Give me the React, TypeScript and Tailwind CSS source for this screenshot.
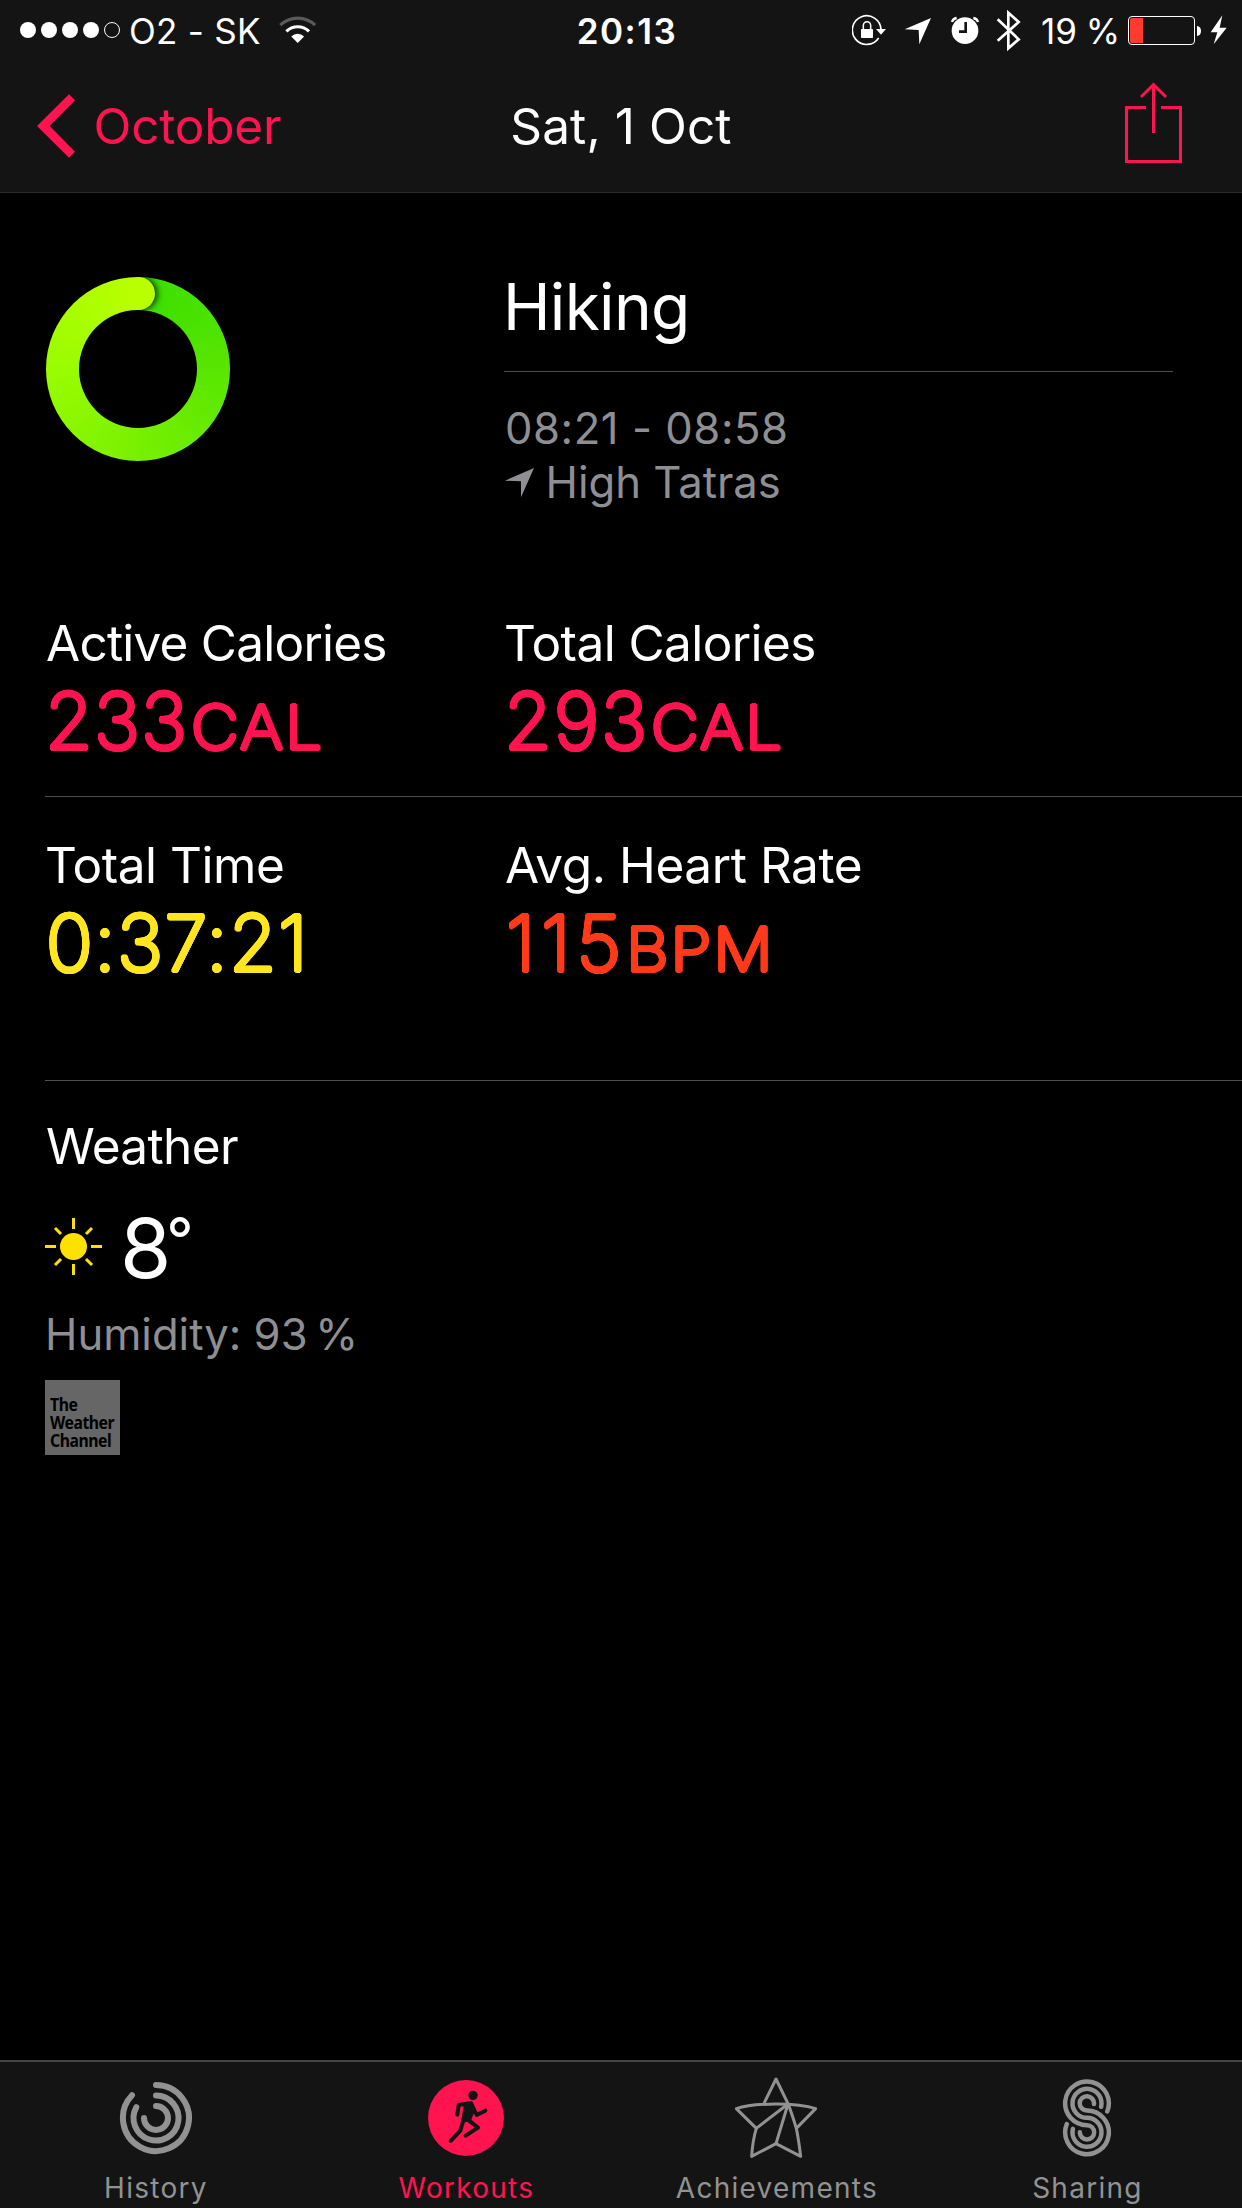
import type { ReactNode } from 'react'
import clsx from 'clsx'

// thickens the extra-light face evenly on all sides, which rounds its stroke ends
const ROUNDED =
  '[text-shadow:1.8px_0_0_currentColor,-1.8px_0_0_currentColor,0_1.8px_0_currentColor,0_-1.8px_0_currentColor,1.3px_1.3px_0_currentColor,-1.3px_1.3px_0_currentColor,1.3px_-1.3px_0_currentColor,-1.3px_-1.3px_0_currentColor,1.66px_0.7px_0_currentColor,-1.66px_0.7px_0_currentColor,1.66px_-0.7px_0_currentColor,-1.66px_-0.7px_0_currentColor,0.7px_1.66px_0_currentColor,-0.7px_1.66px_0_currentColor,0.7px_-1.66px_0_currentColor,-0.7px_-1.66px_0_currentColor]'

function SignalDots() {
  return (
    <svg width="100" height="16" viewBox="0 0 100 16" className="-mt-[2px]">
      {[8, 29, 50, 71].map((x) => (
        <circle key={x} cx={x} cy="8" r="8" fill="#fff" />
      ))}
      <circle cx="92" cy="8" r="7.5" fill="none" stroke="#fff" strokeWidth="1" />
    </svg>
  )
}

function Wifi() {
  return (
    <svg width="38" height="62" viewBox="279 0 38 62" className="ml-[18px]" fill="none" strokeWidth="3.2">
      <path d="M280.3 25.2A24.8 24.8 0 0 1 315.1 25.2" stroke="#5a5a5a" />
      <path d="M286.4 31.4A16 16 0 0 1 309 31.4" stroke="#fff" />
      <path d="M297.7 43L291.3 36.4A9.2 9.2 0 0 1 304.1 36.4Z" fill="#fff" />
    </svg>
  )
}

function StatusIcons() {
  return (
    <>
      <svg width="35" height="62" viewBox="63 0 105 186" fill="none" stroke="#fff">
        <path d="M150 88A43 43 0 1 0 143 114" strokeWidth="5" />
        <path d="M135 87h30l-15 17z" fill="#fff" stroke="none" />
        <rect x="90" y="87" width="36" height="27" rx="2" fill="#fff" stroke="none" />
        <path d="M97 88V76a11 11 0 0 1 22 0v12" strokeWidth="4.5" />
      </svg>
      <svg width="28" height="62" viewBox="219 0 84 186" className="ml-[17px]">
        <path d="M221 88L300 54L265 133L263 90Z" fill="#fff" />
      </svg>
      <svg width="30" height="62" viewBox="357 0 90 186" className="ml-[18px]" fill="none">
        <circle cx="402" cy="92" r="40" fill="#fff" />
        <path d="M404 66V95H384" stroke="#141414" strokeWidth="8" />
        <path d="M363 66Q366 56 377 54M441 66Q438 56 427 54" stroke="#fff" strokeWidth="7" />
      </svg>
      <svg width="25" height="62" viewBox="495 0 75 186" className="ml-4" fill="none">
        <path d="M500 58L563 118L532 145V38L563 66L500 122" stroke="#fff" strokeWidth="8" />
      </svg>
      <span className="ml-5 tracking-[-0.05px]">
        19 <span className="-ml-[1px]">%</span>
      </span>
      <svg width="74" height="62" viewBox="0 0 74 62" className="ml-2" fill="none">
        <rect x="0.5" y="16.5" width="66" height="28" rx="3.5" stroke="#fff" />
        <path d="M2 20q0-2 2-2h11v25H4q-2 0-2-2z" fill="#ff3b30" />
        <path d="M69 26q4 0.500 4 5t-4 5z" fill="#fff" />
      </svg>
      <svg width="18" height="62" viewBox="1141 0 54 186" className="mr-[14px] ml-2">
        <path d="M1178 46L1143 97H1163L1152 133L1191 83H1170Z" fill="#fff" />
      </svg>
    </>
  )
}

function Header() {
  return (
    <header className="h-[193px] border-b border-[#2b2b2b] bg-[#141414]">
      <div className="grid h-[62px] grid-cols-[1fr_auto_1fr] items-center text-[35px] leading-[62px] whitespace-nowrap">
        <div className="flex items-center pl-5">
          <SignalDots />
          <span className="ml-[9px] tracking-[0.27px]">O2 - SK</span>
          <Wifi />
        </div>
        <span className="pl-[12px] font-semibold tracking-[1.44px]">20:13</span>
        <div className="flex items-center justify-end">
          <StatusIcons />
        </div>
      </div>
      <div className="grid h-32 grid-cols-[1fr_auto_1fr] items-center text-[49.5px]">
        <div className="flex items-center pl-[37px] text-[#ff1450]">
          <svg width="38" height="64" viewBox="0 0 38 64">
            <path d="M0 32L32 0.300L38 6.300L12.700 32L38 57.700L32 63.700Z" fill="currentColor" />
          </svg>
          <span className="ml-[18.5px] tracking-[-0.2px]">October</span>
        </div>
        <span className="tracking-[0.1px]">Sat, 1 Oct</span>
        <svg
          width="57"
          height="82"
          viewBox="1125 82 57 82"
          className="mr-[60px] -mt-[7px] justify-self-end"
          fill="none"
          stroke="#ff1450"
          strokeWidth="3"
        >
          <path d="M1146 107.500H1126.500V161.500H1180.500V107.500H1161M1153.500 133V84M1141 97L1153.500 84.500L1166 97" />
        </svg>
      </div>
    </header>
  )
}

function ActivityRing() {
  return (
    <div className="relative mt-[84px] ml-[46px] h-[184px] w-[184px] overflow-hidden rounded-full bg-[conic-gradient(#38de00,#58e600_25%,#78f000_50%,#9afc00_75%,#baff00)]">
      {/* the shadow falls only on the start of the ring, right of the seam */}
      <div className="absolute top-0 left-[92px] h-[33px] w-[40px] overflow-hidden">
        <div className="absolute top-0 -left-[16.5px] h-[33px] w-[33px] rounded-full bg-[#baff00] shadow-[2px_0_6px_rgba(0,0,0,0.85)]" />
      </div>
      <div className="absolute inset-[32.7px] rounded-full bg-black" />
    </div>
  )
}

function Summary() {
  return (
    <section className="grid h-[420px] grid-cols-[504px_669px]">
      <ActivityRing />
      <div className="pt-[74px]">
        <h1 className="border-b border-[#505050] pb-6 text-[64px] leading-[80px] tracking-[-0.7px]">
          <span className="-ml-px">Hiking</span>
        </h1>
        <div className="mt-[30px] text-[43.6px] leading-[54px] text-[#8e8e93]">
          <div className="pl-px tracking-[0.55px]">08:21 - 08:58</div>
          <div className="flex items-center">
            <svg width="30" height="30" viewBox="75 654 90 90" className="-mt-px ml-px">
              <path d="M75 692L162 654L123 742V694Z" fill="currentColor" />
            </svg>
            <span className="ml-[10.5px]">High Tatras</span>
          </div>
        </div>
      </div>
    </section>
  )
}

type MetricProps = {
  label: string
  labelClass: string
  value: string
  valueClass: string
  unit?: string
  unitClass?: string
}

function Metric({ label, labelClass, value, valueClass, unit, unitClass }: MetricProps) {
  return (
    <div>
      <div className={clsx('text-[49.5px] leading-[60px]', labelClass)}>{label}</div>
      <div className={clsx('mt-[6px] flex items-baseline text-[77.5px] leading-[84px] font-extralight', ROUNDED, valueClass)}>
        <span>{value}</span>
        {unit && <span className={clsx('origin-left scale-x-[1.09] text-[60.5px] leading-none', unitClass)}>{unit}</span>}
      </div>
    </div>
  )
}

function Weather() {
  return (
    <section className="ml-[45px] border-t border-[#505050] pt-[35px]">
      <h2 className="ml-px text-[49.5px] leading-[60px] tracking-[-0.62px]">Weather</h2>
      <div className="mt-[30px] flex h-[84px] items-center text-[83px] leading-[84px]">
        <svg width="57" height="57" viewBox="0 0 57 57" className="-mt-[4px]" fill="none" stroke="#ffe100" strokeWidth="3">
          <circle cx="28.5" cy="28.5" r="13.500" fill="#ffe100" stroke="none" />
          <path d="M28.500 0v11M28.500 46v11M0 28.500h11M46 28.500h11M10 10l6 6M41 41l6 6M47 10l-6 6M16 41l-6 6" />
        </svg>
        <span className="ml-[18px]">8</span>
        <span className="-mt-[18px] -ml-[5px] text-[60px]">°</span>
      </div>
      <div className="mt-[18px] text-[43.6px] leading-[54px] text-[#8e8e93]">
        Humidity: 93 <span className="-ml-[4.5px]">%</span>
      </div>
      <div className="mt-[18px] h-[75px] w-[75px] bg-[#666] pt-[15px] pl-[5px] text-black">
        <div className="origin-left scale-x-[0.9] font-['Noto_Sans'] text-[17.5px] leading-[18px] font-bold tracking-[-0.5px] whitespace-pre">
          {'The\nWeather\nChannel'}
        </div>
      </div>
    </section>
  )
}

function HistoryIcon() {
  return (
    <svg width="74" height="74" viewBox="-37 -37 74 74" className="ml-[1.5px]" fill="none" stroke="currentColor" strokeWidth="6" strokeLinecap="round">
      <path d="M0 -33A33 33 0 1 1 -24 -22.700" />
      <path d="M0 -22.500A22.500 22.500 0 1 1 -19.700 -10.800" />
      <path d="M0 -12A12 12 0 1 1 -12 0" />
    </svg>
  )
}

function WorkoutsIcon() {
  return (
    <svg width="76" height="76" viewBox="204 90 228 228" fill="none" stroke="#141414" strokeWidth="12" strokeLinecap="round" strokeLinejoin="round">
      <circle cx="318" cy="204" r="114" fill="currentColor" stroke="none" />
      <circle cx="339" cy="136" r="14" fill="#141414" stroke="none" />
      <path d="M292 194L296 165L333 159L350 195L376 182" />
      <path d="M318 163L334 163L338 182L328 208L310 212Z" fill="#141414" />
      <path d="M320 206L354 233L317 257" />
      <path d="M311 208L301 242L272 273" />
    </svg>
  )
}

function AchievementsIcon() {
  return (
    <svg width="82" height="82" viewBox="285 82 246 246" fill="none" stroke="currentColor" strokeWidth="9" strokeLinejoin="round">
      <path d="M372 161L408 88L444 162Q455 190 469 236Q476 270 482 320L408 282L335 320Q338 272 349 236L289 177Q330 163 408 163T527 177L469 236" />
      <path d="M349 236L444 163L408 282" />
    </svg>
  )
}

function SharingIcon() {
  return (
    <svg width="50" height="80" viewBox="246 85 150 240" fill="none" stroke="currentColor" strokeWidth="13.500" strokeLinecap="round">
      <path d="M381.700 185.500A65.500 65.500 0 1 0 321 226.500A21.500 21.500 0 1 1 299.500 248" />
      <path d="M363.200 171.500A43.500 43.500 0 1 0 321 204.500A43.500 43.500 0 1 1 278.800 237.500" />
      <path d="M342 163A21.500 21.500 0 1 0 321 182.500A65.500 65.500 0 1 1 260.300 223.500" />
    </svg>
  )
}

const TABS: { label: string; icon: ReactNode; active?: boolean }[] = [
  { label: 'History', icon: <HistoryIcon /> },
  { label: 'Workouts', icon: <WorkoutsIcon />, active: true },
  { label: 'Achievements', icon: <AchievementsIcon /> },
  { label: 'Sharing', icon: <SharingIcon /> },
]

function TabBar() {
  return (
    <nav className="mt-auto grid h-[148px] grid-cols-4 border-t-2 border-[#444] bg-[#141414]">
      {TABS.map((t) => (
        <div key={t.label} className={clsx('flex flex-col items-center', t.active ? 'text-[#ff1450]' : 'text-[#929292]')}>
          <div className="flex h-[108px] items-center pt-[4px]">{t.icon}</div>
          <div className="pl-[1.3px] text-[28px] leading-[36px] tracking-[1.26px]">{t.label}</div>
        </div>
      ))}
    </nav>
  )
}

export default function App() {
  return (
    <div className="flex h-[2208px] w-[1242px] flex-col overflow-hidden bg-black font-['Inter',sans-serif] text-white">
      <Header />
      <Summary />
      <section className="ml-[45px] grid h-[183px] grid-cols-[459px_1fr]">
        <Metric
          label="Active Calories"
          labelClass="ml-px tracking-[-0.77px]"
          value="233"
          valueClass="tracking-[1.1px] text-[#ff1450]"
          unit="CAL"
          unitClass="ml-[3px] tracking-[1.8px]"
        />
        <Metric
          label="Total Calories"
          labelClass="tracking-[-0.58px]"
          value="293"
          valueClass="tracking-[2px] text-[#ff1450]"
          unit="CAL"
          unitClass="ml-[1.7px] tracking-[1.8px]"
        />
      </section>
      <section className="ml-[45px] grid h-[284px] grid-cols-[459px_1fr] border-t border-[#505050] pt-[38px]">
        <Metric
          label="Total Time"
          labelClass="tracking-[-0.47px]"
          value="0:37:21"
          valueClass="ml-px tracking-[1.4px] text-[#ffe620]"
        />
        <Metric
          label="Avg. Heart Rate"
          labelClass="ml-px tracking-[-0.43px]"
          value="115"
          valueClass="ml-[2px] tracking-[5.7px] text-[#ff3a1a]"
          unit="BPM"
          unitClass="-ml-[1.3px] tracking-[1.9px]"
        />
      </section>
      <Weather />
      <TabBar />
    </div>
  )
}
